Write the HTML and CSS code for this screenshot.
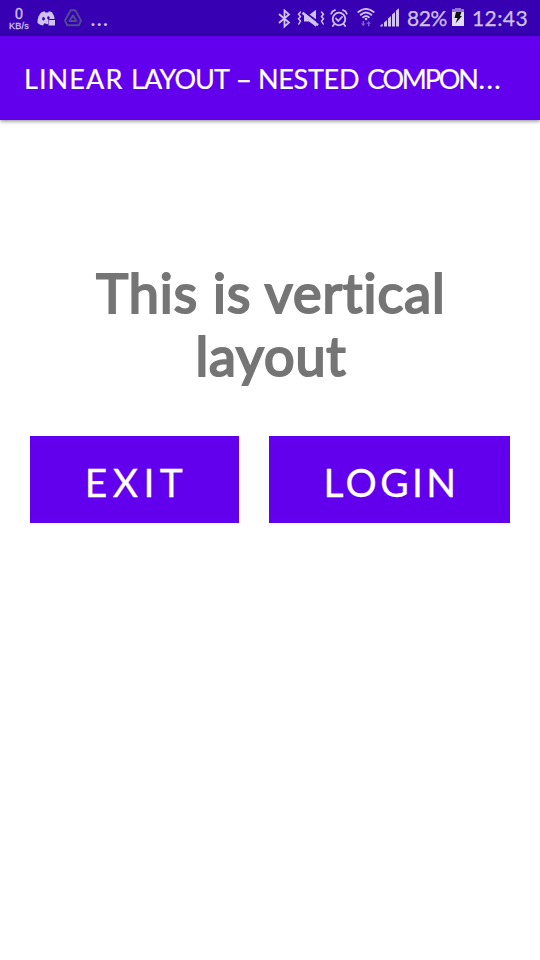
FILE: index.html
```html
<!DOCTYPE html>
<html lang="en">
<head>
<meta charset="utf-8">
<title>Linear Layout</title>
<link rel="stylesheet" href="styles.css">
</head>
<body>
<header class="status">
  <div class="speed"><span class="rate">0</span><span class="unit">KB/s</span></div>
  <svg class="discord" width="20" height="17" viewBox="0 0 20 17"><path fill-rule="evenodd" d="M4.5 1.3 7.5.3 8.3 1.5H11L12 .3 15 1.3Q17.3 4.5 17.6 8H11V13.2L7.4 12.3 6 14.6Q3 14.3.5 12 .3 5 4.5 1.3ZM6.5 6A1.4 1.8 0 1 0 6.5 9.6 1.4 1.8 0 0 0 6.5 6ZM12 5.5A1.3 1.5 0 1 0 12 8.2 1.3 1.5 0 0 0 12 5.5Z"/><path d="M11.5 9H18V14.5H11.5Z"/></svg>
  <svg class="drive" width="18" height="18" viewBox="0 0 18 18"><path d="M6.7 1.2H11.3L17 11.5 14.8 16.3H3.2L1 11.5ZM9 6.2 12.5 12H5.5Z"/></svg>
  <span class="more">...</span>
  <div class="icons">
    <svg class="bt" width="14" height="20" viewBox="0 0 14 20"><path class="line" d="M1.5 5.5 11 13.5 6.5 17.5V1.5L11 5.5 1.5 13.5"/></svg>
    <svg class="mute" width="28" height="20" viewBox="0 0 28 20"><path d="M7 6H12L19 .8V17.8L12 12.5H7Z"/><path class="cut" d="M5 1 23 14.5"/><path class="slash" d="M5.5 3.8 21 16.2"/><path class="line thin" d="M3.5 3 1.5 5.2 3.5 7.5 1.5 9.8 3.5 12 1.8 15M24.5 3 26.5 5.2 24.5 7.5 26.5 9.8 24.5 12 26.2 15"/></svg>
    <svg class="alarm" width="18" height="20" viewBox="0 0 18 20"><circle class="line" cx="9" cy="10" r="6.3"/><path class="line" d="M1.2 4.7Q2 2 5 1.2M13 1.2Q16 2 16.8 4.7M6 9.5 8.2 12 12 8M4 15.5 2.8 17M14 15.5 15.2 17"/></svg>
    <svg class="wifi" width="18" height="20" viewBox="0 0 18 20"><path class="line" d="M1.3 4Q9-2.2 16.7 4M3.7 6.8Q9 2.2 14.3 6.8M6.1 9.3Q9 6.9 11.9 9.3"/><circle cx="9" cy="11" r="1.3"/><path class="dim" d="M5.5 13H7V15.5H8.5L6.2 18.2 4 15.5H5.5ZM11 18.2V15.7H9.3L11.7 13 14 15.7H12.5V18.2Z"/></svg>
    <svg class="signal" width="20" height="20" viewBox="0 0 20 20"><path d="M.3 18.5V17.5L2.7 15.5V18.5ZM4 18.5V14.5L7 12V18.5ZM8 18.5V10.5L11 8V18.5ZM12 18.5V6.5L15 4V18.5ZM16 18.5V2.5L19 .3V18.5Z"/></svg>
    <span class="pct">82%</span>
    <svg class="battery" width="12" height="18" viewBox="0 0 12 18"><path class="cap" d="M3 0H9V1H12V4H0V1H3Z"/><path class="full" d="M0 4H12V18H0Z"/><path class="bolt" d="M4 4H9.5L8 8H10L3.5 15.5 5.5 10H2.5Z"/></svg>
    <span class="clock">12:43</span>
  </div>
</header>
<div class="bar"><span class="bar-title"><span class="t0">LINEAR</span> <span class="t1">LAYOUT</span> <span class="dash">–</span> <span class="t2">NESTED</span> <span class="t3">COMPON<span class="dots">...</span></span></span></div>
<main>
  <h1><span class="l1">This is vertical</span><br><span class="l2">layout</span></h1>
  <div class="buttons">
    <button class="exit"><span>EXIT</span></button>
    <button class="login"><span>LOGIN</span></button>
  </div>
</main>
</body>
</html>
```

FILE: styles.css
```css
* { box-sizing: border-box; }
body { margin: 0; height: 960px; background: #fff; font-family: Lato, "Noto Sans", sans-serif; font-variant-ligatures: none; overflow: hidden; }
.status { height: 36px; background: #3700b3; color: #cfc2f0; display: flex; align-items: flex-start; }
svg { display: block; flex: none; fill: #cfc2f0; }
.line { fill: none; stroke: #cfc2f0; stroke-width: 1.8; stroke-linecap: round; }
.thin { stroke-width: 1.5; }
.cut { fill: none; stroke: #3700b3; stroke-width: 2; }
.slash { fill: none; stroke: #cfc2f0; stroke-width: 2.6; }
.dim { fill: #7d5fce; }
.speed { width: 22px; margin: 7px 0 0 8px; display: flex; flex-direction: column; align-items: center; }
.rate { font: 15px/14px Roboto, sans-serif; -webkit-text-stroke: .3px; }
.unit { font: 500 9px/10px "Liberation Sans", sans-serif; -webkit-text-stroke: .3px; letter-spacing: .2px; }
.discord { margin: 11px 0 0 7px; }
.drive { margin: 9px 0 0 7px; fill: none; stroke: #514a93; stroke-width: 1.9; stroke-linejoin: round; }
.more { width: 20px; margin: 5px 0 0 8px; font: 500 22px/28px Roboto, sans-serif; letter-spacing: .1px; }
.icons { margin-left: auto; width: 264px; display: flex; align-items: flex-start; }
.icons svg { margin-top: 9px; }
.icons .bt { margin-left: 2px; margin-right: 5px; }
.icons .mute { margin-right: 5px; }
.icons .wifi { margin: 8px 6px 0 9px; }
.icons .signal { margin-top: 8px; margin-left: -1px; margin-right: 1px; }
.pct { width: 40px; margin: 5px 5px 0 6px; font-size: 21px; line-height: 26px; letter-spacing: -.4px; white-space: nowrap; -webkit-text-stroke: .25px; }
.icons .battery { margin-top: 8px; margin-right: 8px; }
.battery .cap { fill: #8e73d4; }
.battery .full { fill: #e4dcf7; }
.battery .bolt { fill: #111; }
.clock { margin-top: 5px; font-size: 21px; line-height: 26px; letter-spacing: .4px; white-space: nowrap; -webkit-text-stroke: .25px; }
.bar { position: relative; height: 84px; background: #6200ee; color: #fff; padding-left: 24px; display: flex; align-items: center; box-shadow: 0 1px 4px rgba(0,0,0,.5); }
.bar-title { font-size: 27px; white-space: nowrap; display: flex; padding-top: 1px; -webkit-text-stroke: .2px; }
.t0 { width: 107px; letter-spacing: 1.1px; }
.t1 { width: 105px; letter-spacing: -.9px; }
.dash { width: 22px; -webkit-text-stroke: .7px; }
.t2 { width: 109px; letter-spacing: -.3px; }
.t3 { letter-spacing: -2.2px; }
.dots { letter-spacing: 1.5px; margin-left: 2px; }
main { padding: 142px 30px 0; }
h1 { margin: 0; text-align: center; font-size: 54px; line-height: 62.5px; font-weight: 400; color: #757575; -webkit-text-stroke: 2.2px #757575; stroke-linejoin: round; }
.l1 { letter-spacing: 1px; position: relative; left: 1px; }
.l2 { letter-spacing: .8px; position: relative; left: 1px; }
.buttons { margin-top: 49px; display: flex; gap: 30px; }
button { height: 87px; border: 0; padding: 0; background: #6200ee; color: #fff; font-family: inherit; font-size: 39px; -webkit-text-stroke: .3px; }
button span { position: relative; top: 2px; left: 2px; }
.exit { width: 209px; letter-spacing: 5.4px; }
.login { width: 241px; letter-spacing: 3.4px; }
```
